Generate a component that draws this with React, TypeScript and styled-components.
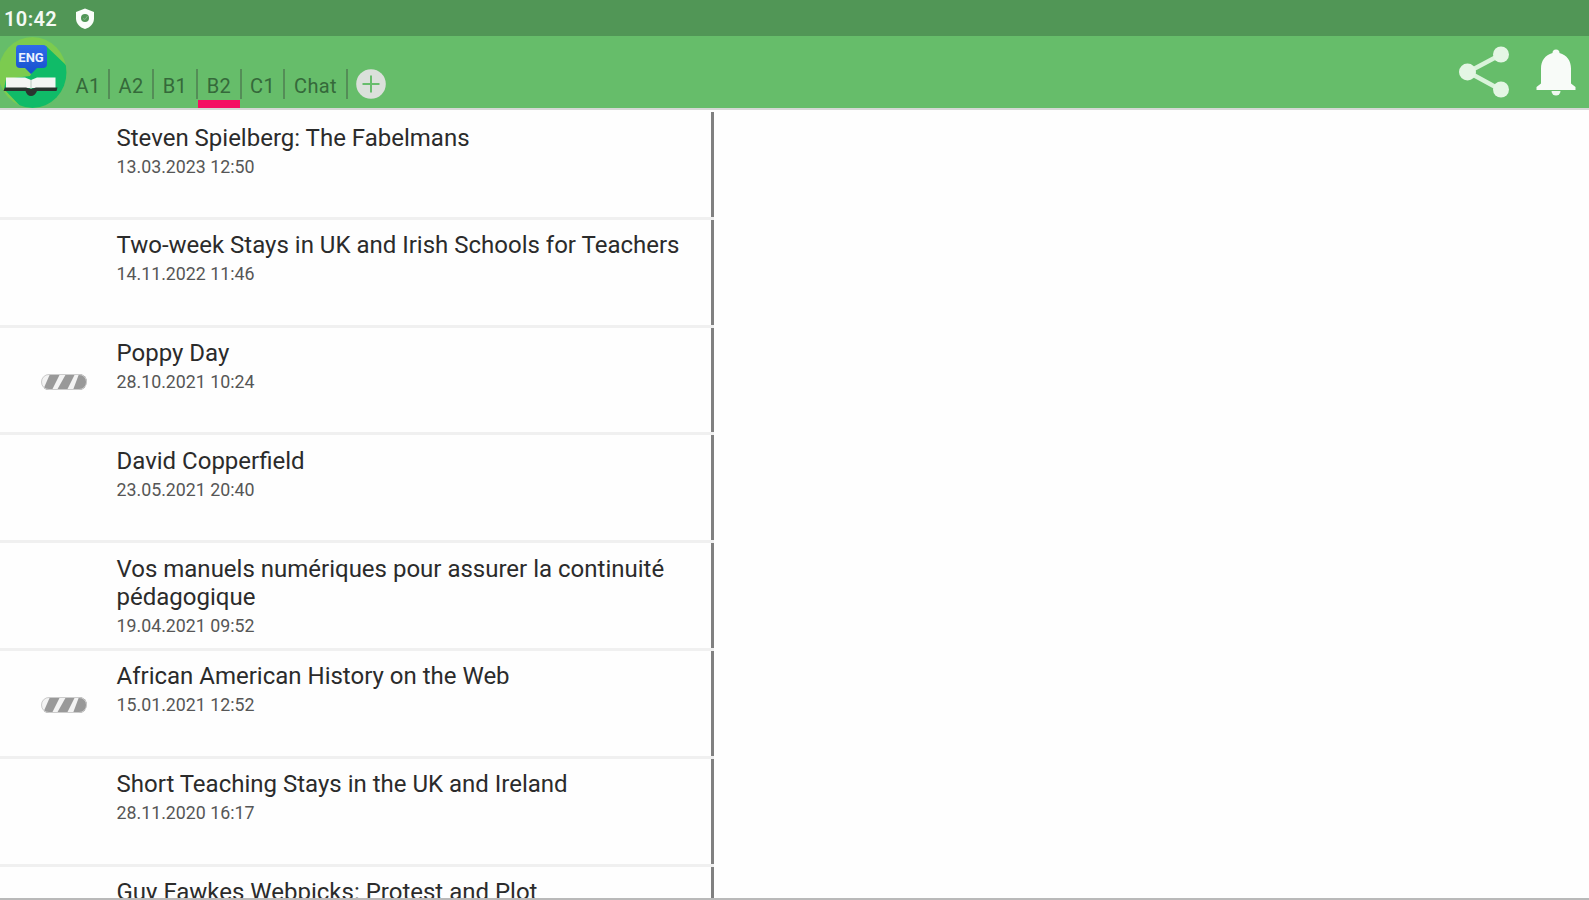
import React from "react";
import styled, { createGlobalStyle } from "styled-components";

const palette = {
    status: "#519656",
    green: "#66bd6a",
    pink: "#f50e62",
    tab_text: "#35693a",
    separator: "#548d57",
    divider: "#f0f0f0",
    pane_line: "#808080",
};

const GlobalStyle = createGlobalStyle`
    * {
        box-sizing: border-box;
    }
    body {
        margin: 0;
        background-color: #fefefe;
        font-family: Roboto, "Liberation Sans", sans-serif;
    }
`;

const Container = styled.div`
    display: flex;
    flex-direction: column;
    width: 100%;
    height: 900px;
    overflow: hidden;
    border-bottom: 2px solid #b9b9b9;
`;

const StatusBar = styled.div`
    display: flex;
    flex: none;
    align-items: center;
    height: 36px;
    padding: 2px 0 0 4px;
    background-color: ${palette.status};
    .status-time {
        width: 71px;
        color: #f4faf4;
        font-size: 20px;
        font-weight: 600;
        letter-spacing: 0.4px;
    }
`;

const Toolbar = styled.header`
    display: flex;
    flex: none;
    justify-content: space-between;
    height: 74px;
    background-color: ${palette.green};
    border-bottom: 2px solid #d5d8d5;
`;

const LeftSide = styled.div`
    display: flex;
`;

const Tabs = styled.nav`
    display: flex;
    align-items: flex-end;
    height: 72px;
`;

const Tab = styled.button<{ $width: number; $active?: boolean }>`
    position: relative;
    width: ${({ $width }) => $width}px;
    height: 39px;
    padding: 0 2px 6px 0;
    border: none;
    background: none;
    color: ${palette.tab_text};
    font: 400 20px/32px Roboto, sans-serif;
    letter-spacing: 0.4px;
    white-space: nowrap;
    &::before {
        content: "";
        position: absolute;
        right: 0;
        top: 0;
        width: 2px;
        height: 30px;
        background-color: ${palette.separator};
    }
    &::after {
        content: "";
        position: absolute;
        left: 0;
        right: 2px;
        bottom: 0;
        height: 8px;
        background-color: ${({ $active }) => ($active ? palette.pink : "transparent")};
    }
`;

const AddButton = styled.button`
    align-self: flex-end;
    width: 30px;
    height: 30px;
    margin: 0 0 9px 8px;
    padding: 0;
    border: none;
    background: none;
    svg {
        display: block;
    }
`;

const Actions = styled.div`
    display: flex;
    svg {
        display: block;
    }
`;

const Content = styled.main`
    display: flex;
    flex: 1;
    min-height: 0;
    padding-top: 2px;
`;

const ArticleList = styled.ul`
    width: 714px;
    height: 100%;
    margin: 0;
    padding: 0;
    overflow: hidden;
    list-style: none;
`;

const ArticleItem = styled.li`
    display: flex;
    height: 107.8px;
    border-bottom: 3px solid ${palette.divider};
    .article-thumb {
        flex: none;
        width: 116.5px;
        padding: 44px 0 0 40px;
        svg {
            display: block;
        }
    }
    .article-body {
        flex: 1;
        padding: 11.5px 20px 0 0;
        border-right: 3px solid ${palette.pane_line};
    }
    .article-title {
        margin: 0;
        color: #2b2b2b;
        font-size: 24px;
        font-weight: 400;
        line-height: 28px;
        white-space: pre-line;
    }
    .article-date {
        margin: 0;
        color: #565656;
        font-size: 17.8px;
        line-height: 29px;
    }
`;

interface IArticle {
    title: string;
    date?: string;
    thumb?: boolean;
}

const tabs = [
    { label: "A1", width: 42 },
    { label: "A2", width: 44 },
    { label: "B1", width: 44 },
    { label: "B2", width: 44 },
    { label: "C1", width: 43 },
    { label: "Chat", width: 63 },
];

const articles: IArticle[] = [
    { title: "Steven Spielberg: The Fabelmans", date: "13.03.2023 12:50" },
    { title: "Two-week Stays in UK and Irish Schools for Teachers", date: "14.11.2022 11:46" },
    { title: "Poppy Day", date: "28.10.2021 10:24", thumb: true },
    { title: "David Copperfield", date: "23.05.2021 20:40" },
    { title: "Vos manuels numériques pour assurer la continuité\npédagogique", date: "19.04.2021 09:52" },
    { title: "African American History on the Web", date: "15.01.2021 12:52", thumb: true },
    { title: "Short Teaching Stays in the UK and Ireland", date: "28.11.2020 16:17" },
    { title: "Guy Fawkes Webpicks: Protest and Plot" },
];

const ShieldIcon = () => (
    <svg width="20" height="24" viewBox="0 0 20 24">
        <path d="M10 1.500 19 5v6.500c0 5-3.600 9-9 10.500C4.600 20.500 1 16.500 1 11.500V5z" fill="#fafdfa" />
        <circle cx="10" cy="11" r="4" fill={palette.status} />
        <path d="M8 11.500l2 1 2.500-3.500" fill="none" stroke="#7fb283" strokeWidth="1" />
    </svg>
);

const Logo = () => (
    <svg width="68" height="72" viewBox="0 0 68 72">
        <defs>
            <clipPath id="logo-circle">
                <ellipse cx="32.500" cy="36.500" rx="34" ry="35.500" />
            </clipPath>
            <linearGradient id="logo-bubble" x1="0" y1="0" x2="0" y2="1">
                <stop offset="0" stopColor="#2f6bea" />
                <stop offset="1" stopColor="#1650cc" />
            </linearGradient>
        </defs>
        <g clipPath="url(#logo-circle)">
            <rect width="68" height="72" fill="#7ccb4f" />
            <path d="M46 10 68 31V72H22L4 53 6 43 30 40z" fill="#10bb68" />
        </g>
        <path d="M19 9h24q4 0 4 4v15q0 4-4 4h-6l-6 6-6-6h-5q-4 0-4-4V13q0-4 3-4z" fill="url(#logo-bubble)" />
        <text x="31" y="26" textAnchor="middle" fontFamily="Roboto, sans-serif" fontSize="13" fontWeight="700" fill="#eaf2ff">
            ENG
        </text>
        <path d="M6 41.500h19l6 2.500 6-2.500h18.500V52H6z" fill="#f3f5f3" />
        <path d="M5 51.500h21l5 1.500 5-1.500h21.500l-1 3.500H37q-2 5-6 5T25.500 55H3.500z" fill="#2a342f" />
        <path d="M31 44v9" stroke="#b9c8bf" strokeWidth="1" />
    </svg>
);

const PlusIcon = () => (
    <svg width="30" height="30" viewBox="0 0 30 30">
        <circle cx="15" cy="15" r="14.800" fill="#dbe0db" />
        <path d="M15 6.500v17M6.500 15h17" stroke="#67bd6c" strokeWidth="2" />
    </svg>
);

const ShareIcon = () => (
    <svg width="70" height="72" viewBox="0 0 70 72">
        <path d="M49 18.500 16 36l33 18" fill="none" stroke="#d9f3da" strokeWidth="4.500" />
        <g fill="#e4f6e4">
            <circle cx="49" cy="18.500" r="8" />
            <circle cx="15.500" cy="36" r="8.500" />
            <circle cx="49" cy="53.500" r="8" />
        </g>
    </svg>
);

const BellIcon = () => (
    <svg width="67" height="72" viewBox="0 0 67 72">
        <path
            d="M34 13.500a3.500 3.500 0 0 1 3.500 3.500c7.500 2 11.500 8 11.500 15.500V47.500l4.500 3.500v3h-39v-3l4.500-3.500V32.500c0-7.500 4-13.500 11.500-15.500a3.500 3.500 0 0 1 3.500-3.500z"
            fill="#f8fbf8"
        />
        <path d="M29.500 55h9a4.500 4.500 0 0 1-9 0z" fill="#f0f8f0" />
    </svg>
);

const ThumbIcon = () => (
    <svg width="48" height="20" viewBox="0 0 48 20">
        <defs>
            <clipPath id="thumb-pill">
                <rect x="1" y="2" width="46" height="16" rx="8" />
            </clipPath>
        </defs>
        <rect x="1" y="2" width="46" height="16" rx="8" fill="#f3f3f3" />
        <g clipPath="url(#thumb-pill)" fill="#999999">
            <path d="M10 2h10l-8 16H3z" />
            <path d="M26 2h9l-8 16H17z" />
            <path d="M39 2h8v8l-3 8H33z" />
        </g>
        <rect x="1.500" y="2.500" width="45" height="15" rx="7.500" fill="none" stroke="#cccccc" />
    </svg>
);

const App: React.FC = () => {
    return (
        <>
            <GlobalStyle />
            <Container>
                <StatusBar>
                    <span className="status-time">10:42</span>
                    <ShieldIcon />
                </StatusBar>
                <Toolbar>
                    <LeftSide>
                        <Logo />
                        <Tabs>
                            {tabs.map((tab) => (
                                <Tab key={tab.label} type="button" $width={tab.width} $active={tab.label === "B2"}>
                                    {tab.label}
                                </Tab>
                            ))}
                        </Tabs>
                        <AddButton type="button" aria-label="Add">
                            <PlusIcon />
                        </AddButton>
                    </LeftSide>
                    <Actions>
                        <ShareIcon />
                        <BellIcon />
                    </Actions>
                </Toolbar>
                <Content>
                    <ArticleList>
                        {articles.map((article) => (
                            <ArticleItem key={article.title}>
                                <div className="article-thumb">{article.thumb && <ThumbIcon />}</div>
                                <div className="article-body">
                                    <h2 className="article-title">{article.title}</h2>
                                    {article.date && <p className="article-date">{article.date}</p>}
                                </div>
                            </ArticleItem>
                        ))}
                    </ArticleList>
                </Content>
            </Container>
        </>
    );
};

export default App;
